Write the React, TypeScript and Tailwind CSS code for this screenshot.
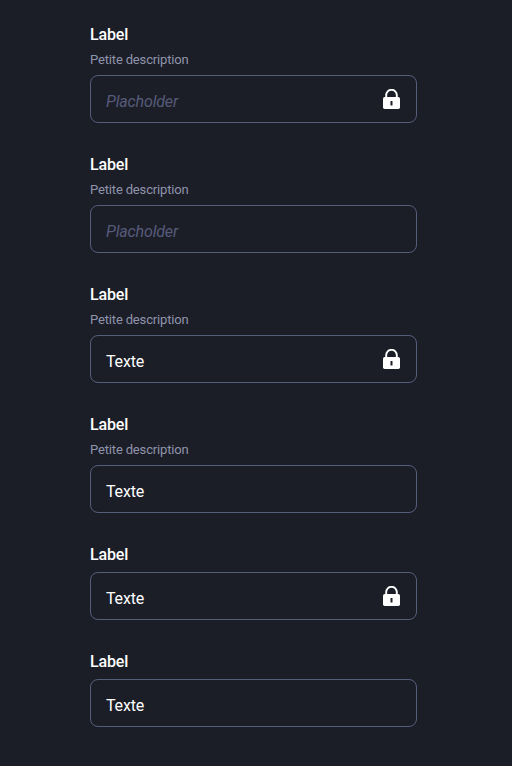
type FieldProps = { description?: string; value?: string; placeholder?: string; locked?: boolean };

function Lock() {
  return (
    <svg className="h-5 w-[17px]" viewBox="0 0 17 20" fill="none">
      <path d="M3.2 9V6.1a5.3 5.3 0 0 1 10.6 0V9" stroke="white" strokeWidth="1.9" />
      <rect y="8" width="17" height="12" rx="1.7" fill="white" />
      <rect x="7.5" y="12" width="2" height="4.4" rx=".5" fill="#1c1e27" />
    </svg>
  );
}

function Field({ description, value, placeholder, locked }: FieldProps) {
  return (
    <div>
      <div className="h-[19px] text-[16px] leading-[19px] font-medium tracking-[-0.15px] text-white">Label</div>
      {description && <div className="mt-2 -mb-px h-4 text-[13px] leading-4 tracking-[-0.16px] text-[#8f94ab]">{description}</div>}
      <div className="mt-2 flex h-12 w-[327px] items-center justify-between rounded-lg border border-[#565d7b] pr-4 pl-[15px]">
        <span className={value ? "pt-[5px] text-[16px] tracking-[-0.15px] text-white" : "pt-[5px] text-[16px] tracking-[-0.15px] text-[#565b7a] italic"}>{value || placeholder}</span>
        {locked && <Lock />}
      </div>
    </div>
  );
}

export default function App() {
  return (
    <main className="flex h-[766px] w-[512px] flex-col gap-8 bg-[#1c1e27] pt-[25px] pl-[90px] font-['Roboto',sans-serif]">
      <Field description="Petite description" placeholder="Placholder" locked />
      <Field description="Petite description" placeholder="Placholder" />
      <Field description="Petite description" value="Texte" locked />
      <Field description="Petite description" value="Texte" />
      <Field value="Texte" locked />
      <Field value="Texte" />
    </main>
  );
}
